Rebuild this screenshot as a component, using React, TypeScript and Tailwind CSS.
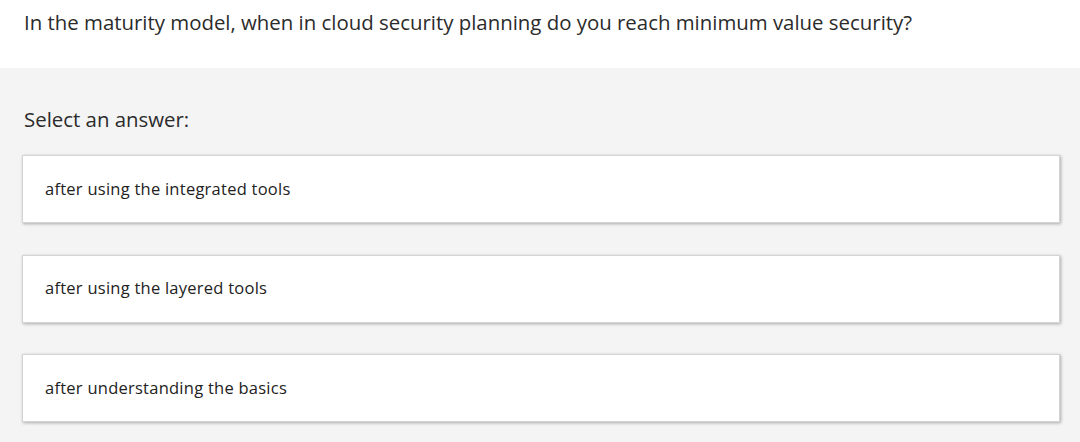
const answers = [
  "after using the integrated tools",
  "after using the layered tools",
  "after understanding the basics",
]

export default function App() {
  return (
    <div
      className="min-h-screen bg-[#f4f4f4] text-[#262626]"
      style={{ fontFamily: "'Open Sans', 'Noto Sans', sans-serif" }}
    >
      {/* Question */}
      <div className="bg-white h-[68px] px-6 pt-[7px]">
        <h1 className="text-[20.4px] leading-[30px] text-[#2b2b2b]">
          In the maturity model, when in cloud security planning do you reach minimum value security?
        </h1>
      </div>

      {/* Answers */}
      <div className="px-[22px] pt-[36px]">
        <p className="px-[2px] text-[20.4px] leading-[30px] text-[#2b2b2b] mb-[21px]">Select an answer:</p>
        <div className="flex flex-col gap-[31.5px] w-[1038px]">
          {answers.map((a) => (
            <button
              key={a}
              className="h-[68px] bg-white border border-[#d4d4d4] shadow-[1px_1px_3px_rgba(0,0,0,0.3)] text-left px-[22px] text-[16.5px] tracking-[0.25px] text-[#222]"
            >
              {a}
            </button>
          ))}
        </div>
      </div>
    </div>
  )
}
